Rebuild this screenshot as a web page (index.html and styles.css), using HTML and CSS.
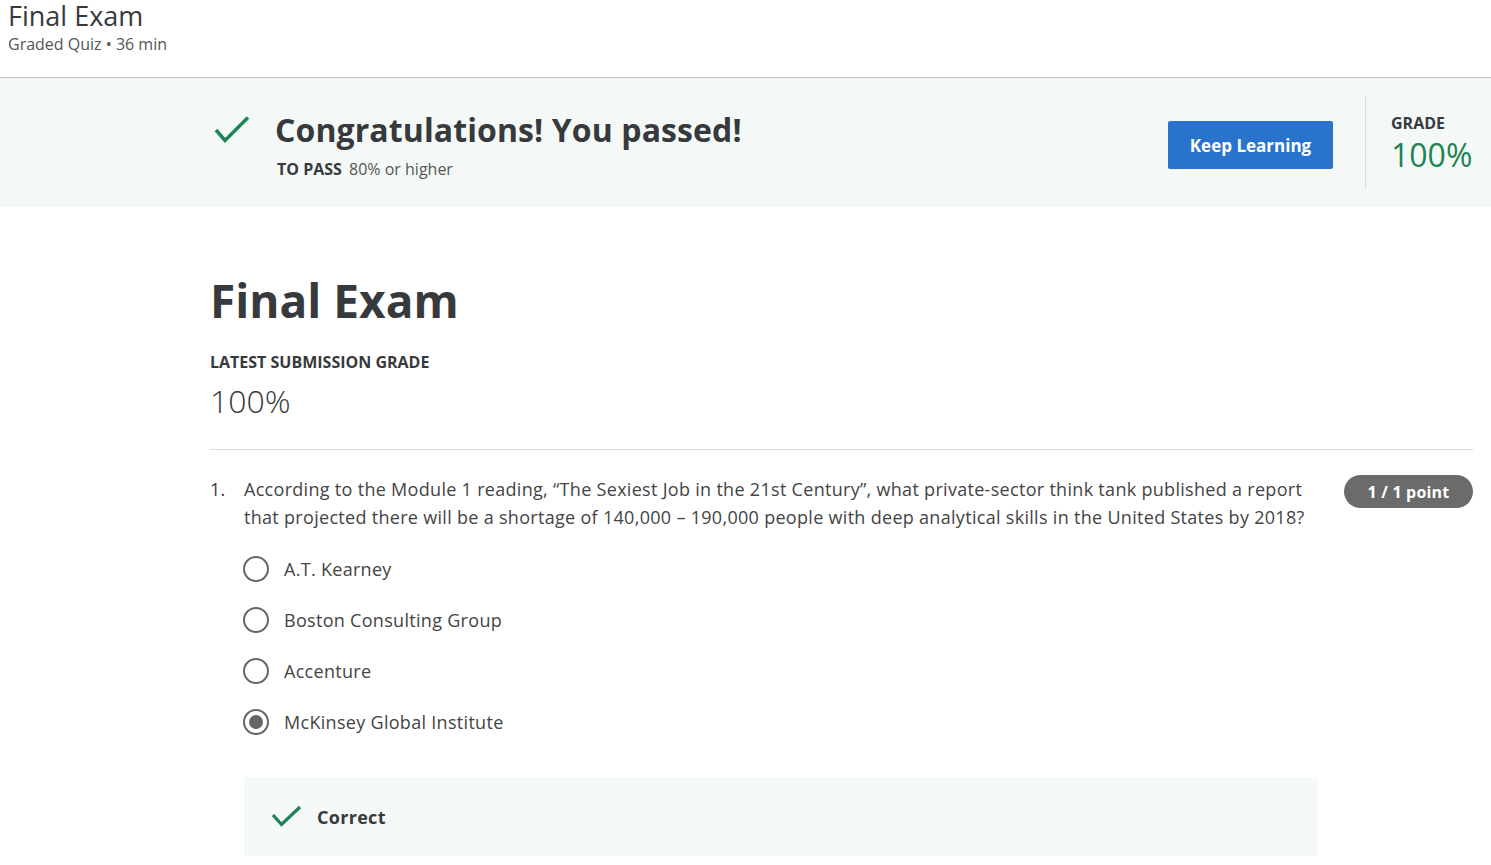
FILE: index.html
```html
<!DOCTYPE html>
<html lang="en">
<head>
<meta charset="utf-8">
<title>Final Exam</title>
<link rel="stylesheet" href="styles.css">
</head>
<body>
<header class="top">
  <h1 class="top-title">Final Exam</h1>
  <div class="top-sub">Graded Quiz • 36 min</div>
</header>

<section class="banner">
  <div class="banner-left">
    <div class="banner-row">
      <svg class="check-lg" width="40" height="30" viewBox="0 0 40 30" aria-hidden="true">
        <polyline points="3,15 12,25.5 35,2.5" fill="none" stroke="#1f8354" stroke-width="3.5"/>
      </svg>
      <h2 class="banner-title">Congratulations! You passed!</h2>
    </div>
    <div class="to-pass"><b>TO PASS</b> 80% or higher</div>
  </div>
  <button class="btn-primary">Keep Learning</button>
  <div class="grade-box">
    <div class="grade-label">GRADE</div>
    <div class="grade-value">100%</div>
  </div>
</section>

<main class="main">
  <h2 class="exam-title">Final Exam</h2>
  <div class="sub-label">LATEST SUBMISSION GRADE</div>
  <div class="sub-grade">100%</div>
  <hr class="divider">

  <div class="question">
    <div class="q-num">1.</div>
    <div class="q-body">
      <p class="q-text">According to the Module 1 reading, “The Sexiest Job in the 21st Century”, what private-sector think tank published a report that projected there will be a shortage of 140,000 – 190,000 people with deep analytical skills in the United States by 2018?</p>
      <ul class="options">
        <li class="option"><span class="radio"></span>A.T. Kearney</li>
        <li class="option"><span class="radio"></span>Boston Consulting Group</li>
        <li class="option"><span class="radio"></span>Accenture</li>
        <li class="option"><span class="radio checked"></span>McKinsey Global Institute</li>
      </ul>
      <div class="feedback">
        <svg class="check-sm" width="32" height="24" viewBox="0 0 32 24" aria-hidden="true">
          <polyline points="2,10 10.5,19.5 29,2" fill="none" stroke="#1f8354" stroke-width="3.2"/>
        </svg>
        <span class="feedback-text">Correct</span>
      </div>
    </div>
    <div class="badge">1 / 1 point</div>
  </div>
</main>
</body>
</html>
```

FILE: styles.css
```css
* { box-sizing: border-box; }
html, body { margin: 0; padding: 0; }
body {
  font-family: "Open Sans", "Noto Sans", "DejaVu Sans", sans-serif;
  color: #373a3c;
  background: #fff;
  overflow: hidden;
}

.top {
  height: 78px;
  padding: 0 8px;
  border-bottom: 1px solid #c4c4c4;
}
.top-title {
  margin: 0;
  font-size: 27px;
  font-weight: 400;
  line-height: 32px;
  color: #373a3c;
}
.top-sub {
  font-size: 16px;
  line-height: 24px;
  margin-top: 0;
  color: #555;
}

.banner {
  height: 129px;
  background: #f4f9f8;
  display: flex;
  padding: 18px 18px 19px 210px;
}
.banner-left {
  flex: 1;
  padding-top: 14px;
}
.banner-row {
  display: flex;
  align-items: center;
}
.check-lg {
  margin-left: 3px;
  margin-right: 22px;
  flex: none;
}
.banner-title {
  margin: 0;
  font-size: 32px;
  font-weight: 700;
  line-height: 40px;
  color: #373a3c;
  letter-spacing: 0.1px;
}
.to-pass {
  margin-top: 7px;
  margin-left: 67px;
  font-size: 16px;
  line-height: 24px;
  color: #555;
}
.to-pass b {
  color: #373a3c;
  margin-right: 3px;
}
.btn-primary {
  align-self: center;
  margin-top: 6px;
  width: 165px;
  height: 48px;
  background: #2a73cc;
  color: #fff;
  border: none;
  border-radius: 2px;
  font-family: inherit;
  font-size: 17px;
  font-weight: 700;
  padding: 0;
}
.grade-box {
  margin-left: 32px;
  border-left: 1px solid #dcdcdc;
  padding-left: 25px;
  padding-top: 17px;
  width: 108px;
}
.grade-label {
  font-size: 16px;
  font-weight: 700;
  line-height: 20px;
}
.grade-value {
  margin-top: 2px;
  font-size: 32px;
  line-height: 40px;
  font-weight: 400;
  color: #1f8354;
}

.main {
  padding: 63px 18px 0 210px;
}
.exam-title {
  margin: 0;
  font-size: 46px;
  font-weight: 700;
  line-height: 60px;
  color: #373a3c;
}
.sub-label {
  margin-top: 22px;
  font-size: 16px;
  font-weight: 700;
  line-height: 20px;
}
.sub-grade {
  margin-top: 9px;
  font-size: 32px;
  font-weight: 300;
  line-height: 40px;
}
.divider {
  margin: 28px 0 0;
  border: none;
  border-top: 1px solid #dadada;
}

.question {
  display: flex;
  margin-top: 25px;
  font-size: 18px;
  line-height: 28px;
  letter-spacing: 0.3px;
}
.q-num {
  width: 34px;
  flex: none;
}
.q-body {
  width: 1074px;
  flex: none;
}
.q-text {
  margin: 0;
  color: #444;
}
.options {
  list-style: none;
  margin: 12px 0 0;
  padding: 0;
}
.option {
  height: 51px;
  display: flex;
  align-items: center;
  color: #444;
}
.radio {
  width: 26px;
  height: 26px;
  border: 2px solid #666;
  border-radius: 50%;
  margin-left: -1px;
  margin-right: 15px;
  display: flex;
  align-items: center;
  justify-content: center;
}
.radio.checked::after {
  content: "";
  width: 14px;
  height: 14px;
  border-radius: 50%;
  background: #666;
}
.feedback {
  margin-top: 30px;
  height: 79px;
  background: #f5f9f8;
  display: flex;
  align-items: center;
  padding-left: 27px;
}
.check-sm {
  margin-right: 14px;
  flex: none;
}
.feedback-text {
  font-size: 18px;
  font-weight: 700;
}
.badge {
  margin-left: 26px;
  width: 129px;
  height: 33px;
  border-radius: 17px;
  background: #6b6b6b;
  color: #fff;
  font-size: 16px;
  font-weight: 700;
  letter-spacing: 0.2px;
  display: flex;
  align-items: center;
  justify-content: center;
  flex: none;
}
```
